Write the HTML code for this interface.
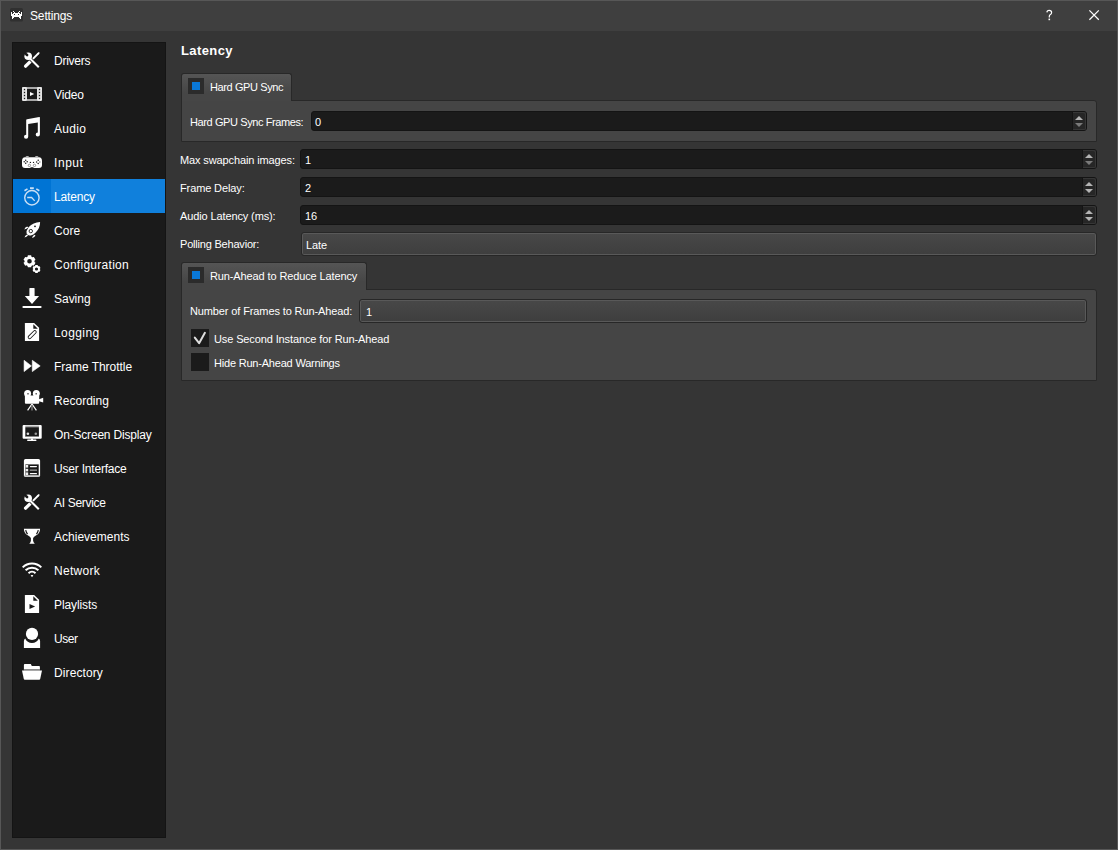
<!DOCTYPE html>
<html><head><meta charset="utf-8">
<style>
*{box-sizing:border-box;margin:0;padding:0}
html,body{width:1118px;height:850px;overflow:hidden;background:#353535}
body{font-family:"Liberation Sans",sans-serif;font-size:11px;color:#fff;position:relative}
.a{position:absolute}
.t{position:absolute;white-space:nowrap;line-height:14px;font-size:11px;color:#fff;letter-spacing:-0.12px}
#border{left:0;top:0;width:1118px;height:850px;border:1px solid #575757}
#title{left:1px;top:1px;width:1116px;height:30px;background:#3f3f3f}
.side{position:absolute;left:12px;top:42px;width:154px;height:796px;background:#1a1a1a;border:1px solid #141414}
.item{position:absolute;left:0;width:152px;height:34px}
.item.sel{background:#1080dc}
.item.sel .ic{position:absolute;left:0;top:0;width:38px;height:34px;background:#0074d4}
.item svg{position:absolute;left:11px;top:9px;width:16px;height:16px;overflow:visible}
.item .lb{position:absolute;left:41px;top:11px;font-size:12px;line-height:14px;white-space:nowrap;letter-spacing:-0.18px}
.grp{position:absolute;background:#454545;border:1px solid #282828;border-radius:0 3px 0 0}
.tab{position:absolute;background:linear-gradient(#555555,#464646 70%);border:1px solid #282828;border-bottom:none;border-radius:3px 3px 0 0}
.chk{position:absolute;width:16px;height:16px;background:#2b2b2b}
.chk i{position:absolute;left:4px;top:4px;width:8px;height:8px;background:#0a78d7}
.spin{position:absolute;height:20px;background:#1b1b1b;border:1px solid #141414;border-radius:3px}
.spin .btn{position:absolute;right:0;top:0;width:14px;height:18px;border-left:1px solid #141414;background:#262626;border-radius:0 2px 2px 0;box-shadow:inset -1px 1px 0 #363636,inset 0 -1px 0 #363636}
.spin .up,.spin .dn{position:absolute;left:2px;width:0;height:0;border-left:4px solid transparent;border-right:4px solid transparent}
.spin .up{top:4px;border-bottom:4px solid #b4b4b4}
.spin .dn{top:11px;border-top:4px solid #b4b4b4}
.spin .dim{border-top-color:#7a7a7a}
.combo{position:absolute;background:linear-gradient(#484848,#3e3e3e);border:1px solid #272727;border-radius:3px;box-shadow:inset 0 0 0 1px #595959}
.cb{position:absolute;width:18px;height:18px;background:#1b1b1b}
</style></head><body>
<div class="a" id="border"></div>
<div class="a" id="title"></div>
<svg class="a" style="left:0;top:0" width="40" height="30" viewBox="0 0 40 30"><rect x="10" y="8" width="13" height="13.5" rx="1.5" fill="#303030"/><g fill="#fff"><rect x="13" y="11" width="1" height="1"/><rect x="19" y="11" width="1" height="1"/><rect x="11" y="12" width="1" height="1"/><rect x="14" y="12" width="1" height="1"/><rect x="18" y="12" width="1" height="1"/><rect x="21" y="12" width="1" height="1"/><rect x="11" y="13" width="1" height="1"/><rect x="13" y="13" width="1" height="1"/><rect x="14" y="13" width="1" height="1"/><rect x="15" y="13" width="1" height="1"/><rect x="16" y="13" width="1" height="1"/><rect x="17" y="13" width="1" height="1"/><rect x="18" y="13" width="1" height="1"/><rect x="19" y="13" width="1" height="1"/><rect x="21" y="13" width="1" height="1"/><rect x="11" y="14" width="1" height="1"/><rect x="12" y="14" width="1" height="1"/><rect x="13" y="14" width="1" height="1"/><rect x="15" y="14" width="1" height="1"/><rect x="16" y="14" width="1" height="1"/><rect x="17" y="14" width="1" height="1"/><rect x="19" y="14" width="1" height="1"/><rect x="20" y="14" width="1" height="1"/><rect x="21" y="14" width="1" height="1"/><rect x="11" y="15" width="1" height="1"/><rect x="12" y="15" width="1" height="1"/><rect x="13" y="15" width="1" height="1"/><rect x="14" y="15" width="1" height="1"/><rect x="15" y="15" width="1" height="1"/><rect x="16" y="15" width="1" height="1"/><rect x="17" y="15" width="1" height="1"/><rect x="18" y="15" width="1" height="1"/><rect x="19" y="15" width="1" height="1"/><rect x="20" y="15" width="1" height="1"/><rect x="21" y="15" width="1" height="1"/><rect x="12" y="16" width="1" height="1"/><rect x="13" y="16" width="1" height="1"/><rect x="14" y="16" width="1" height="1"/><rect x="15" y="16" width="1" height="1"/><rect x="16" y="16" width="1" height="1"/><rect x="17" y="16" width="1" height="1"/><rect x="18" y="16" width="1" height="1"/><rect x="19" y="16" width="1" height="1"/><rect x="20" y="16" width="1" height="1"/><rect x="12" y="17" width="1" height="1"/><rect x="13" y="17" width="1" height="1"/><rect x="19" y="17" width="1" height="1"/><rect x="20" y="17" width="1" height="1"/><rect x="12" y="18" width="1" height="1"/><rect x="20" y="18" width="1" height="1"/></g></svg>
<div class="t" style="left:30px;top:9px;font-size:12px;letter-spacing:-0.15px">Settings</div>
<svg class="a" style="left:1040px;top:5px" width="20" height="20" viewBox="1040 5 20 20"><path d="M1046.9 12.4 Q1047 10.4 1049.2 10.4 Q1051.6 10.4 1051.6 12.5 Q1051.6 13.8 1050.4 14.6 Q1049.3 15.3 1049.3 16.3 V17.4" fill="none" stroke="#fff" stroke-width="1.2"/><rect x="1048.5" y="18.6" width="1.6" height="1.6" fill="#fff"/></svg>
<svg class="a" style="left:1080px;top:0px" width="30" height="30" viewBox="1080 0 30 30"><path d="M1089.4 10.4 L1098.8 19.8 M1098.8 10.4 L1089.4 19.8" stroke="#fff" stroke-width="1.25"/></svg>

<div class="side">
<div class="item" style="top:0px"><div class="ic"></div><div class="lb" style="letter-spacing:-0.247px">Drivers</div></div>
<div class="item" style="top:34px"><div class="ic"></div><div class="lb" style="letter-spacing:-0.16px">Video</div></div>
<div class="item" style="top:68px"><div class="ic"></div><div class="lb" style="letter-spacing:0.3px">Audio</div></div>
<div class="item" style="top:102px"><div class="ic"></div><div class="lb" style="letter-spacing:0.56px">Input</div></div>
<div class="item sel" style="top:136px"><div class="ic"></div><div class="lb" style="letter-spacing:-0.154px">Latency</div></div>
<div class="item" style="top:170px"><div class="ic"></div><div class="lb" style="letter-spacing:0.033px">Core</div></div>
<div class="item" style="top:204px"><div class="ic"></div><div class="lb" style="letter-spacing:0.28px">Configuration</div></div>
<div class="item" style="top:238px"><div class="ic"></div><div class="lb" style="letter-spacing:-0.02px">Saving</div></div>
<div class="item" style="top:272px"><div class="ic"></div><div class="lb" style="letter-spacing:0.407px">Logging</div></div>
<div class="item" style="top:306px"><div class="ic"></div><div class="lb" style="letter-spacing:-0.026px">Frame Throttle</div></div>
<div class="item" style="top:340px"><div class="ic"></div><div class="lb" style="letter-spacing:0.03px">Recording</div></div>
<div class="item" style="top:374px"><div class="ic"></div><div class="lb" style="letter-spacing:-0.185px">On-Screen Display</div></div>
<div class="item" style="top:408px"><div class="ic"></div><div class="lb" style="letter-spacing:-0.198px">User Interface</div></div>
<div class="item" style="top:442px"><div class="ic"></div><div class="lb" style="letter-spacing:-0.304px">AI Service</div></div>
<div class="item" style="top:476px"><div class="ic"></div><div class="lb" style="letter-spacing:0.016px">Achievements</div></div>
<div class="item" style="top:510px"><div class="ic"></div><div class="lb" style="letter-spacing:0.273px">Network</div></div>
<div class="item" style="top:544px"><div class="ic"></div><div class="lb" style="letter-spacing:-0.1px">Playlists</div></div>
<div class="item" style="top:578px"><div class="ic"></div><div class="lb" style="letter-spacing:-0.42px">User</div></div>
<div class="item" style="top:612px"><div class="ic"></div><div class="lb" style="letter-spacing:0.1px">Directory</div></div>
</div>
<svg class="a" style="left:0;top:0" width="1118" height="850" viewBox="0 0 1118 850"><g transform="translate(0 0)"><path d="M25.6 66.2 L31 60.8" stroke="#fff" stroke-width="3.3" stroke-linecap="round"/><path d="M32.4 59.4 L38.4 53.4" stroke="#fff" stroke-width="2" stroke-linecap="round"/><path d="M36.6 54.2 Q38.6 52 39.5 52.3 Q39.8 53.2 37.6 55.2Z" fill="#fff"/><path d="M29 57.5 L38.8 67.3" stroke="#1a1a1a" stroke-width="3.6"/><path d="M29 57.5 L38.8 67.3" stroke="#fff" stroke-width="2"/><circle cx="28.2" cy="56.2" r="3.8" fill="#fff"/><path d="M26.8 54.8 L23 51" stroke="#1a1a1a" stroke-width="2.4"/><circle cx="27.1" cy="55.1" r="1.3" fill="#1a1a1a"/></g><rect x="22" y="87" width="20" height="14" rx="1.3" fill="#a8a8a8"/><rect x="22" y="87" width="5" height="14" rx="1.4" fill="#e8e8e8"/><rect x="37" y="87" width="5" height="14" rx="1.4" fill="#e8e8e8"/><path d="M22.5 91 H26.5 M22.5 94 H26.5 M22.5 97 H26.5 M37.5 91 H41.5 M37.5 94 H41.5 M37.5 97 H41.5" stroke="#bbb" stroke-width="0.6"/><rect x="27" y="89" width="10" height="10" fill="#1a1a1a"/><circle cx="24.5" cy="89.5" r="0.75" fill="#1a1a1a"/><circle cx="39.5" cy="89.5" r="0.75" fill="#1a1a1a"/><circle cx="24.5" cy="92.5" r="0.75" fill="#1a1a1a"/><circle cx="39.5" cy="92.5" r="0.75" fill="#1a1a1a"/><circle cx="24.5" cy="95.5" r="0.75" fill="#1a1a1a"/><circle cx="39.5" cy="95.5" r="0.75" fill="#1a1a1a"/><circle cx="24.5" cy="98.5" r="0.75" fill="#1a1a1a"/><circle cx="39.5" cy="98.5" r="0.75" fill="#1a1a1a"/><path d="M30 92 L34.2 94 L30 96Z" fill="#fff"/><path fill="#fff" d="M26.2 120.2 Q26.2 119.4 27 119.3 L39.3 117 Q39.9 116.9 39.9 117.5 V134.6 A2.1 2 0 1 1 37.8 132.6 V122.4 L28.2 124 V136.8 A2.1 2 0 1 1 26.2 134.8 Z"/><path fill="#fff" d="M25 157.2 H39 Q42 157.2 42 161 V165 Q42 168 39 168 H34 L33 167.3 H31 L30 168 H25 Q22 168 22 165 V161 Q22 157.2 25 157.2Z"/><path fill="#bdbdbd" d="M25.3 157.3 Q25.8 156 27.3 156 Q28.8 156 29.3 157.3Z M34.7 157.3 Q35.2 156 36.7 156 Q38.2 156 38.7 157.3Z"/><circle cx="25.7" cy="160.2" r="0.75" fill="#1a1a1a"/><circle cx="24.2" cy="161.7" r="0.75" fill="#1a1a1a"/><circle cx="27.2" cy="161.7" r="0.75" fill="#1a1a1a"/><circle cx="25.7" cy="163.2" r="0.75" fill="#1a1a1a"/><circle cx="30.4" cy="162.4" r="0.7" fill="#1a1a1a"/><circle cx="33.5" cy="162.4" r="0.7" fill="#1a1a1a"/><circle cx="38.2" cy="160.2" r="0.75" fill="#1a1a1a"/><circle cx="36.6" cy="161.9" r="0.75" fill="#1a1a1a"/><circle cx="39.8" cy="161.9" r="0.75" fill="#777"/><circle cx="38.2" cy="163.6" r="0.75" fill="#1a1a1a"/><circle cx="29.4" cy="165.4" r="1.2" fill="none" stroke="#8a8a8a" stroke-width="0.9"/><circle cx="34.5" cy="165.4" r="1.2" fill="none" stroke="#8a8a8a" stroke-width="0.9"/><g fill="none" stroke="#c9dff5"><circle cx="31.9" cy="197.75" r="7.2" stroke-width="1.4"/><path d="M27.2 197.5 H31.6 L34.7 200.9" stroke-width="1.3"/><path d="M30 188.2 H33.8" stroke-width="1.9"/><path d="M24.5 190.8 L27.5 188.9 M39.3 190.8 L36.3 188.9" stroke-width="1.6"/></g><path fill="#fff" d="M40.1 221.9 Q33.2 222 28.6 227.3 Q26 230.8 26.6 233.4 Q27.6 236 30.8 235.4 Q33.5 234.7 35.7 232.4 Q40.1 228 40.1 221.9Z"/><circle cx="30.8" cy="231.1" r="1.7" fill="none" stroke="#1a1a1a" stroke-width="0.9"/><circle cx="35" cy="226.3" r="0.9" fill="#1a1a1a"/><path fill="#fff" d="M24.3 229.5 Q25 227.3 27.2 226.6 L28.3 227.6 Q26.5 229.3 24.3 229.5Z M24.5 237.6 Q25 235.3 27 234.5 L28 235.5 Q26.5 237.2 24.5 237.6Z M32 238 Q32.5 235.7 34.6 234.8 L35.5 235.8 Q34 237.6 32 238Z"/><path fill="#fff" fill-rule="evenodd" d="M27.55 256.69 L27.85 255.32 L31.15 255.32 L31.45 256.69 L32.51 257.31 L33.85 256.88 L35.50 259.74 L34.46 260.68 L34.46 261.92 L35.50 262.86 L33.85 265.72 L32.51 265.29 L31.45 265.91 L31.15 267.28 L27.85 267.28 L27.55 265.91 L26.49 265.29 L25.15 265.72 L23.50 262.86 L24.54 261.92 L24.54 260.68 L23.50 259.74 L25.15 256.88 L26.49 257.31Z M31.8 261.3 A2.3 2.3 0 1 0 27.2 261.3 A2.3 2.3 0 1 0 31.8 261.3Z"/><path fill="#fff" fill-rule="evenodd" d="M35.06 266.03 L35.29 265.08 L37.71 265.08 L37.94 266.03 L38.36 266.27 L39.29 265.99 L40.50 268.09 L39.79 268.76 L39.79 269.24 L40.50 269.91 L39.29 272.01 L38.36 271.73 L37.94 271.97 L37.71 272.92 L35.29 272.92 L35.06 271.97 L34.64 271.73 L33.71 272.01 L32.50 269.91 L33.21 269.24 L33.21 268.76 L32.50 268.09 L33.71 265.99 L34.64 266.27Z M38.1 269 A1.6 1.6 0 1 0 34.9 269 A1.6 1.6 0 1 0 38.1 269Z" stroke="#1a1a1a" stroke-width="0.6" paint-order="stroke"/><path fill="#fff" d="M29.4 288.6 Q29.4 288 30 288 H34 Q34.6 288 34.6 288.6 V296 H39.1 L32 303.9 L24.8 296 H29.4Z"/><rect x="22.4" y="305.9" width="19.2" height="2" rx="1" fill="#fff"/><g transform="translate(0 0)"><path fill="#fff" d="M24.9 323.4 Q24.9 322.9 25.4 322.9 H34.1 L39.1 327.8 V340.5 Q39.1 341 38.6 341 H25.4 Q24.9 341 24.9 340.5Z"/><path fill="#1a1a1a" d="M33.3 324.3 V328.8 H37.8Z"/><path d="M29.6 337.2 L34.8 332" stroke="#1a1a1a" stroke-width="3.8" stroke-linecap="round"/><path d="M29.6 337.2 L34.8 332" stroke="#fff" stroke-width="2" stroke-linecap="round"/></g><path fill="#fff" stroke="#fff" stroke-width="0.6" stroke-linejoin="round" d="M24.1 360.3 L31.4 365.9 L24.1 371.6Z M32.3 360.3 L40.2 365.9 L32.3 371.6Z"/><g fill="#fff"><circle cx="27.6" cy="393.6" r="3.5"/><circle cx="36.3" cy="393.6" r="3.5"/><rect x="24.9" y="395.5" width="14.3" height="8.3" rx="1"/><path d="M39 399.3 L43.2 397.8 V402.4 L39 401.2Z"/></g><rect x="27.3" y="393" width="1.4" height="1.5" fill="#555"/><rect x="35.5" y="393" width="1.4" height="1.5" fill="#555"/><path d="M32 404 L27.6 410.4 M32 404 L36.4 410.4" stroke="#fff" stroke-width="1.2"/><path d="M32 405 V410.5" stroke="#888" stroke-width="1.3"/><rect x="22.6" y="425.1" width="19.1" height="13.7" rx="1" fill="#fff"/><rect x="25.3" y="427.2" width="13.6" height="9.3" fill="#1a1a1a"/><rect x="25.3" y="425.6" width="13.6" height="1.4" fill="#aaa"/><circle cx="27.9" cy="433.8" r="1.3" fill="#ddd"/><circle cx="35.8" cy="433.8" r="1.3" fill="#999"/><rect x="25.3" y="436" width="13.6" height="1" fill="#888"/><rect x="31" y="438.5" width="2" height="1.5" fill="#fff"/><rect x="27.2" y="439.6" width="9.2" height="1.4" rx="0.5" fill="#fff"/><rect x="23.9" y="459.1" width="16.2" height="17.8" rx="1.6" fill="#fff"/><rect x="25.4" y="464.4" width="13.3" height="10.8" fill="#1a1a1a"/><g fill="#eee"><rect x="25.6" y="465" width="2.6" height="2.6"/><rect x="25.6" y="468.8" width="2.6" height="2.6"/><rect x="25.6" y="472.4" width="2.6" height="2.6"/></g><rect x="29.8" y="465.9" width="7.2" height="1.3" rx="0.6" fill="#fff"/><rect x="29.8" y="469.5" width="7.2" height="1.3" fill="#999"/><rect x="29.8" y="473" width="7.2" height="1.3" rx="0.6" fill="#fff"/><rect x="24.5" y="475.2" width="15" height="1.4" fill="#aaa"/><g transform="translate(0 442)"><path d="M25.6 66.2 L31 60.8" stroke="#fff" stroke-width="3.3" stroke-linecap="round"/><path d="M32.4 59.4 L38.4 53.4" stroke="#fff" stroke-width="2" stroke-linecap="round"/><path d="M36.6 54.2 Q38.6 52 39.5 52.3 Q39.8 53.2 37.6 55.2Z" fill="#fff"/><path d="M29 57.5 L38.8 67.3" stroke="#1a1a1a" stroke-width="3.6"/><path d="M29 57.5 L38.8 67.3" stroke="#fff" stroke-width="2"/><circle cx="28.2" cy="56.2" r="3.8" fill="#fff"/><path d="M26.8 54.8 L23 51" stroke="#1a1a1a" stroke-width="2.4"/><circle cx="27.1" cy="55.1" r="1.3" fill="#1a1a1a"/></g><path fill="#fff" d="M23.9 528.7 H40.1 Q40.1 533.6 35.5 535.8 Q33.4 536.8 33.1 538.3 V540.8 Q33.3 542.4 34.8 543.7 H29.3 Q30.8 542.4 30.9 540.8 V538.3 Q30.6 536.8 28.5 535.8 Q23.9 533.6 23.9 528.7Z"/><path d="M25.7 530.2 Q26.2 532.8 27.6 534 M38.3 530.2 Q37.8 532.8 36.4 534" stroke="#1a1a1a" stroke-width="1.2" fill="none"/><g fill="none" stroke="#fff" stroke-width="2"><path d="M22.7 567.4 A13.2 13.2 0 0 1 41.3 567.4"/><path d="M25.6 570.3 A9.1 9.1 0 0 1 38.4 570.3"/><path d="M28.5 573.2 A5 5 0 0 1 35.5 573.2"/></g><path fill="#fff" d="M30.6 575.3 Q32 574.5 33.4 575.3 L32 577.3Z"/><g transform="translate(0 272)"><path fill="#fff" d="M24.9 323.4 Q24.9 322.9 25.4 322.9 H34.1 L39.1 327.8 V340.5 Q39.1 341 38.6 341 H25.4 Q24.9 341 24.9 340.5Z"/><path fill="#1a1a1a" d="M33.3 324.3 V328.8 H37.8Z"/><path fill="#1a1a1a" d="M29.5 331.9 L35.1 334.4 L29.5 336.9Z"/></g><circle cx="32" cy="633.9" r="6.1" fill="#fff"/><path fill="#fff" d="M23.9 641 Q24.1 639.2 25.2 638.6 A7.4 7.4 0 0 0 38.8 638.6 Q39.9 639.2 40.1 641 V647.9 H23.9Z"/><path fill="#fff" d="M23.9 665 Q23.9 664.1 24.8 664.1 H30.8 L31.8 665.9 H39 Q39.9 665.9 39.9 666.8 V669.6 H23.9Z"/><rect x="23.9" y="669.2" width="16" height="1.3" fill="#8a8a8a"/><path fill="#fff" d="M22 670.5 H42 L40.2 678.9 Q40 679.7 39.2 679.7 H24.8 Q24 679.7 23.8 678.9Z"/></svg>

<div class="t" style="left:181px;top:44px;font-size:13px;font-weight:bold;letter-spacing:0.4px">Latency</div>

<div class="grp" style="left:181px;top:100px;width:916px;height:42px"></div>
<div class="tab" style="left:181px;top:73px;width:111px;height:28px"></div>
<div class="chk" style="left:188px;top:78px"><i></i></div>
<div class="t" style="left:210px;top:80px;letter-spacing:-0.4px">Hard GPU Sync</div>
<div class="t" style="left:190px;top:115px;letter-spacing:-0.4px">Hard GPU Sync Frames:</div>
<div class="spin" style="left:311px;top:111px;width:776px"><div class="t" style="left:3px;top:3px">0</div><div class="btn"><i class="up"></i><i class="dn dim"></i></div></div>

<div class="t" style="left:180px;top:153px">Max swapchain images:</div>
<div class="spin" style="left:300px;top:149px;width:797px"><div class="t" style="left:4px;top:3px">1</div><div class="btn"><i class="up"></i><i class="dn dim"></i></div></div>
<div class="t" style="left:180px;top:181px">Frame Delay:</div>
<div class="spin" style="left:300px;top:177px;width:797px"><div class="t" style="left:4px;top:3px">2</div><div class="btn"><i class="up"></i><i class="dn"></i></div></div>
<div class="t" style="left:180px;top:209px">Audio Latency (ms):</div>
<div class="spin" style="left:300px;top:205px;width:797px"><div class="t" style="left:4px;top:3px">16</div><div class="btn"><i class="up"></i><i class="dn"></i></div></div>
<div class="t" style="left:180px;top:237px;letter-spacing:-0.2px">Polling Behavior:</div>
<div class="combo" style="left:301px;top:232px;width:796px;height:24px"><div class="t" style="left:4px;top:5px">Late</div></div>

<div class="grp" style="left:181px;top:289px;width:916px;height:92px"></div>
<div class="tab" style="left:181px;top:262px;width:186px;height:28px"></div>
<div class="chk" style="left:188px;top:267px"><i></i></div>
<div class="t" style="left:210px;top:269px">Run-Ahead to Reduce Latency</div>
<div class="t" style="left:190px;top:304px">Number of Frames to Run-Ahead:</div>
<div class="combo" style="left:359px;top:299px;width:728px;height:24px"><div class="t" style="left:6px;top:5px">1</div></div>
<div class="cb" style="left:191px;top:329px"><svg style="position:absolute;left:0;top:0" width="18" height="18" viewBox="0 0 18 18"><path d="M3.8 8.6 L8.1 14.2 L13.9 3.8" fill="none" stroke="#dedede" stroke-width="2" stroke-linejoin="round" stroke-linecap="round"/></svg></div>
<div class="t" style="left:214px;top:332px">Use Second Instance for Run-Ahead</div>
<div class="cb" style="left:191px;top:353px"></div>
<div class="t" style="left:214px;top:356px;letter-spacing:-0.2px">Hide Run-Ahead Warnings</div>
</body></html>
